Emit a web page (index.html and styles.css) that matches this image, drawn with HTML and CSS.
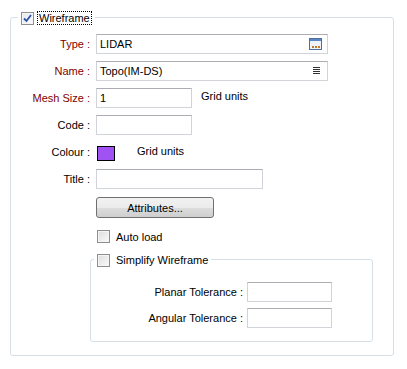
FILE: index.html
```html
<!DOCTYPE html>
<html lang="en">
<head>
    <meta charset="UTF-8">
    <title>Wireframe</title>
    <link rel="stylesheet" href="styles.css">
</head>
<body>
    <!-- Wireframe group -->
    <div class="group outer">
        <div class="legend">
            <span class="check checked">
                <svg width="9" height="9" viewBox="0 0 9 9"><path d="M1 4.5 L3.5 7 L8 1" fill="none" stroke="#2c4fa8" stroke-width="1.8"/></svg>
            </span>
            <span class="focus">Wireframe</span>
        </div>

        <div class="form">
            <div class="row">
                <label class="req">Type :</label>
                <div class="input wide">LIDAR
                    <svg class="icon" width="13" height="12" viewBox="0 0 13 12">
                        <rect x="0.5" y="0.5" width="12" height="11" fill="#eef3fa" stroke="#4d6f9e"/>
                        <rect x="1" y="1" width="11" height="2" fill="#5b86c4"/>
                        <rect x="3" y="8" width="2" height="2" fill="#c07a2a"/>
                        <rect x="6" y="8" width="2" height="2" fill="#c07a2a"/>
                        <rect x="9" y="8" width="2" height="2" fill="#c07a2a"/>
                    </svg>
                </div>
            </div>
            <div class="row">
                <label class="req">Name :</label>
                <div class="input wide">Topo(IM-DS)
                    <svg class="icon list" width="7" height="8" viewBox="0 0 7 8">
                        <path d="M0 0.5 H7 M0 2.5 H7 M0 4.5 H7 M0 6.5 H7" stroke="#333" stroke-width="1"/>
                    </svg>
                </div>
            </div>
            <div class="row">
                <label class="req">Mesh Size :</label>
                <div class="input short">1</div>
                <span class="units">Grid units</span>
            </div>
            <div class="row">
                <label>Code :</label>
                <div class="input short"></div>
            </div>
            <div class="row">
                <label>Colour :</label>
                <span class="swatch"></span>
                <span class="units colour-units">Grid units</span>
            </div>
            <div class="row">
                <label>Title :</label>
                <div class="input title"></div>
            </div>

            <button class="btn">Attributes...</button>

            <div class="check-row">
                <span class="check"></span>
                <span>Auto load</span>
            </div>

            <!-- Simplify group -->
            <div class="group inner">
                <div class="legend">
                    <span class="check"></span>
                    <span>Simplify Wireframe</span>
                </div>
                <div class="tolerances">
                    <div class="row">
                        <label class="tol">Planar Tolerance :</label>
                        <div class="input tol-input"></div>
                    </div>
                    <div class="row">
                        <label class="tol">Angular Tolerance :</label>
                        <div class="input tol-input"></div>
                    </div>
                </div>
            </div>
        </div>
    </div>
</body>
</html>
```
FILE: styles.css
```css
body {
    margin: 0;
    background-color: white;
    font-family: "Liberation Sans", Arial, sans-serif;
    font-size: 11px;
    color: #000;
}

.group {
    border: 1px solid #d5dfe5;
    border-radius: 3px;
}

.outer {
    margin: 17px 13px 0 10px;
    padding-bottom: 13px;
}

.inner {
    margin: 16px 20px 0 79px;
    padding-bottom: 13px;
}

.legend {
    display: flex;
    align-items: center;
    gap: 3px;
    height: 14px;
    margin-top: -7px;
    margin-left: 7px;
    padding: 0 3px;
    background-color: white;
    width: max-content;
}

.inner .legend {
    margin-left: 3px;
    gap: 6px;
}

.focus {
    border: 1px dotted #000;
    padding: 0 1px;
    line-height: 12px;
}

.check {
    width: 11px;
    height: 11px;
    border: 1px solid #8e8f8f;
    background: linear-gradient(135deg, #dcdcdc, #fbfbfb);
    box-shadow: inset 0 0 0 1px #f4f4f4;
    display: flex;
    align-items: center;
    justify-content: center;
    flex: none;
}

.checked {
    background: linear-gradient(135deg, #e4e8ee, #fafbfc);
}

.form {
    margin-top: 9px;
    display: flex;
    flex-direction: column;
}

.row {
    display: flex;
    align-items: center;
    height: 20px;
    margin-bottom: 7px;
}

.row label {
    width: 79px;
    margin-right: 6px;
    text-align: right;
    flex: none;
}

.req {
    color: #7f0000;
}

.input {
    box-sizing: border-box;
    height: 20px;
    border: 1px solid #d0d4d9;
    border-top-color: #abadb3;
    background-color: white;
    padding-left: 3px;
    display: flex;
    align-items: center;
    position: relative;
}

.wide {
    width: 232px;
}

.short {
    width: 96px;
}

.title {
    width: 167px;
}

.icon {
    position: absolute;
    right: 5px;
    top: 3px;
}

.list {
    right: 7px;
    top: 5px;
}

.units {
    margin-left: 9px;
    margin-top: -5px;
}

.swatch {
    width: 16px;
    height: 13px;
    border: 1px solid #000;
    background-color: #a052f2;
    margin-left: 1px;
    margin-top: 3px;
}

.colour-units {
    margin-left: 22px;
    margin-top: -3px;
}

.btn {
    width: 118px;
    height: 21px;
    margin: 1px 0 0 85px;
    border: 1px solid #707070;
    border-radius: 3px;
    background: linear-gradient(#f2f2f2 0%, #ebebeb 50%, #dddddd 51%, #cfcfcf 100%);
    font-family: inherit;
    font-size: 11px;
    color: #000;
    padding: 0;
}

.check-row {
    display: flex;
    align-items: center;
    gap: 6px;
    margin: 12px 0 0 86px;
    height: 13px;
}

.tolerances {
    margin-top: 15px;
}

.tolerances .row {
    margin-bottom: 6px;
}

.tolerances .row:last-child {
    margin-bottom: 0;
}

.row .tol {
    width: 152px;
    margin-right: 4px;
}

.tol-input {
    width: 85px;
}
```
